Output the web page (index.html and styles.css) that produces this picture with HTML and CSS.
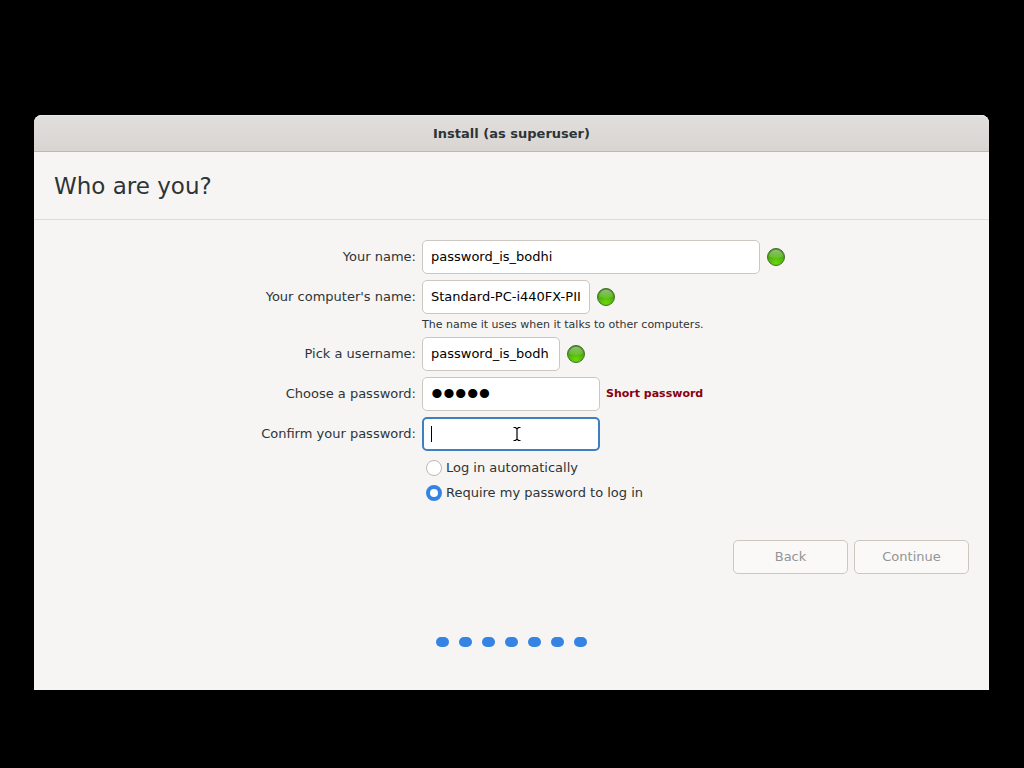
FILE: index.html
```html
<!DOCTYPE html>
<html lang="en">
<head>
<meta charset="utf-8">
<meta name="viewport" content="width=device-width, initial-scale=1">
<title>Install (as superuser)</title>
<link rel="stylesheet" href="styles.css">
</head>
<body>
<svg class="defs" aria-hidden="true">
  <defs>
    <radialGradient id="orb" cx="0.5" cy="0.85" r="0.8">
      <stop offset="0" stop-color="#6bd80a"/>
      <stop offset="0.6" stop-color="#4fb00c"/>
      <stop offset="1" stop-color="#478f20"/>
    </radialGradient>
    <linearGradient id="shine" x1="0" y1="0" x2="0" y2="1">
      <stop offset="0" stop-color="#fff" stop-opacity="0.4"/>
      <stop offset="1" stop-color="#fff" stop-opacity="0.1"/>
    </linearGradient>
    <symbol id="ok" viewBox="0 0 20 20">
      <circle cx="10" cy="10" r="8.5" fill="url(#orb)" stroke="#44702c" stroke-width="1"/>
      <path d="M3 9.500a7 6.800 0 0 1 14 0q-7 3-14 0z" fill="url(#shine)"/>
    </symbol>
  </defs>
</svg>
<main class="window">
  <header class="titlebar">Install (as superuser)</header>
  <h1 class="heading">Who are you?</h1>
  <form class="form">
    <label class="label" for="name">Your name:</label>
    <div class="field">
      <input class="entry entry-name" id="name" type="text" value="password_is_bodhi">
      <svg class="status" role="img" aria-label="Valid"><use href="#ok"/></svg>
    </div>
    <label class="label" for="host">Your computer's name:</label>
    <div class="field">
      <input class="entry entry-host" id="host" type="text" value="Standard-PC-i440FX-PII">
      <svg class="status" role="img" aria-label="Valid"><use href="#ok"/></svg>
    </div>
    <p class="hint">The name it uses when it talks to other computers.</p>
    <label class="label" for="user">Pick a username:</label>
    <div class="field">
      <input class="entry entry-user" id="user" type="text" value="password_is_bodh">
      <svg class="status" role="img" aria-label="Valid"><use href="#ok"/></svg>
    </div>
    <label class="label" for="pass">Choose a password:</label>
    <div class="field">
      <input class="entry entry-pass entry-filled" id="pass" type="password" value="bodhi">
      <span class="warning">Short password</span>
    </div>
    <label class="label" for="confirm">Confirm your password:</label>
    <div class="field">
      <div class="focus-wrap">
        <input class="entry entry-pass entry-focus" id="confirm" type="password">
        <span class="caret"></span>
        <svg class="pointer" viewBox="0 0 8 14" aria-hidden="true"><path d="M0.500 0.500H2.500L4 2L5.500 0.500H7.500M4 2V12M0.500 13.500H2.500L4 12L5.500 13.500H7.500" fill="none" stroke="#000" stroke-width="1.2"/></svg>
      </div>
    </div>
    <div class="options">
      <label class="option"><input class="radio" type="radio" name="login">Log in automatically</label>
      <label class="option"><input class="radio" type="radio" name="login" checked>Require my password to log in</label>
    </div>
  </form>
  <div class="actions">
    <button class="button" type="button" disabled>Back</button>
    <button class="button" type="button" disabled>Continue</button>
  </div>
  <div class="dots">
    <span class="dot"></span><span class="dot"></span><span class="dot"></span><span class="dot"></span><span class="dot"></span><span class="dot"></span><span class="dot"></span>
  </div>
</main>
</body>
</html>
```
FILE: styles.css
```css
* {
  box-sizing: border-box;
}

body {
  margin: 0;
  padding: 115px 35px 78px 34px;
  background: #000;
  color: #2e3436;
  font: 13px/20px "DejaVu Sans", sans-serif;
}

.defs {
  position: absolute;
  width: 0;
  height: 0;
}

.window {
  background: #f6f5f4;
  border-radius: 8px 8px 0 0;
  padding-bottom: 43px;
}

.titlebar {
  height: 37px;
  border-bottom: 1px solid #bfb8b1;
  border-radius: 8px 8px 0 0;
  background: linear-gradient(#e1dfde, #d8d5d1);
  box-shadow: inset 0 1px #eceae9;
  font-weight: bold;
  line-height: 37px;
  text-align: center;
}

.heading {
  margin: 0;
  padding: 20px 20px 19px;
  border-bottom: 1px solid #dddcda;
  font-size: 23px;
  font-weight: normal;
  line-height: 28px;
}

.form {
  display: grid;
  grid-template-columns: 40% 1fr;
  row-gap: 6px;
  padding-top: 20px;
}

.label {
  align-self: center;
  text-align: right;
}

.field {
  display: flex;
  align-items: center;
  gap: 6px;
  padding-left: 6px;
}

.entry {
  width: 178px;
  height: 34px;
  padding: 0 8px 2px;
  border: 1px solid #cdc7c2;
  border-radius: 5px;
  background: #fff;
  color: #000;
  font: inherit;
  outline: none;
}

.entry-name {
  width: 338px;
}

.entry-host {
  width: 168px;
}

.entry-user {
  width: 138px;
}

.entry-filled {
  font-family: "Liberation Sans", sans-serif;
  font-size: 34px;
  line-height: 32px;
}

.entry-focus {
  display: block;
  border: 2px solid #3f7fbf;
  caret-color: transparent;
}

.status {
  width: 20px;
  height: 20px;
}

.warning {
  color: #8b0010;
  font-size: 11px;
  font-weight: bold;
}

.hint {
  grid-column: 2;
  margin: 0;
  padding: 0 0 1px 6px;
  font-size: 11px;
  line-height: 10px;
}

.focus-wrap {
  position: relative;
}

.caret {
  position: absolute;
  top: 9px;
  left: 9px;
  width: 1px;
  height: 16px;
  background: #000;
}

.pointer {
  position: absolute;
  top: 10px;
  left: 91px;
  width: 8px;
  height: 14px;
}

.options {
  grid-column: 2;
  display: grid;
  gap: 5px;
  padding: 1px 0 0 10px;
}

.option {
  display: flex;
  align-items: center;
  gap: 4px;
}

.radio {
  appearance: none;
  width: 16px;
  height: 16px;
  margin: 0;
  border: 1px solid #bfb8b1;
  border-radius: 50%;
  background: #fff;
}

.radio:checked {
  border: 4px solid #3584e4;
}

.actions {
  display: flex;
  justify-content: flex-end;
  gap: 6px;
  padding: 37px 20px 0;
}

.button {
  width: 115px;
  height: 34px;
  padding: 0;
  border: 1px solid #cdc7c2;
  border-radius: 5px;
  background: #faf9f8;
  color: #929595;
  font: inherit;
}

.dots {
  display: flex;
  justify-content: center;
  gap: 10px;
  padding-top: 63px;
}

.dot {
  width: 13px;
  height: 10px;
  border-radius: 5px;
  background: #3584e4;
}
```
